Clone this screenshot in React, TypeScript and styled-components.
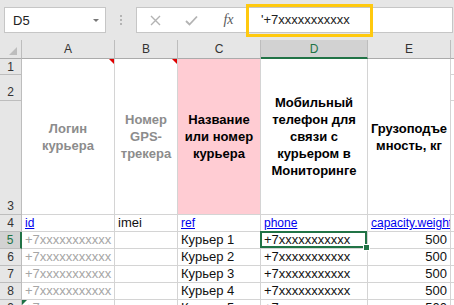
import React from 'react';
import styled, { createGlobalStyle, css } from 'styled-components';

const GlobalStyle = createGlobalStyle`
  html, body {
    margin: 0;
    padding: 0;
    background: #e6e6e6;
  }
  body {
    font-family: 'Liberation Sans', Arial, sans-serif;
    overflow: hidden;
  }
`;

const Window = styled.div`
  width: 454px;
  height: 305px;
  overflow: hidden;
  background: #e6e6e6;
`;

const Toolbar = styled.div`
  display: flex;
  align-items: flex-start;
  height: 40px;
  box-sizing: border-box;
  padding: 7px 1px 0 4px;
`;

const NameBox = styled.div`
  display: flex;
  align-items: center;
  justify-content: space-between;
  box-sizing: border-box;
  width: 102px;
  height: 26px;
  padding: 0 6px 0 8px;
  background: #fff;
  border: 1px solid #c6c6c6;
  font-size: 13px;
  color: #222;
`;

const Caret = styled.span`
  width: 0;
  height: 0;
  border-left: 3px solid transparent;
  border-right: 3px solid transparent;
  border-top: 3px solid #777;
`;

const Grip = styled.div`
  width: 30px;
  height: 26px;
  display: flex;
  flex-direction: column;
  align-items: center;
  justify-content: center;
  gap: 2px;

  span {
    width: 2px;
    height: 2px;
    background: #b4b4b4;
  }
`;

const FormulaBox = styled.div`
  flex: 1;
  display: flex;
  height: 26px;
  box-sizing: border-box;
  background: #fff;
  border: 1px solid #c6c6c6;
`;

const ToolButton = styled.div<{ $w: number }>`
  width: ${p => p.$w}px;
  display: flex;
  align-items: center;
  justify-content: center;
  color: #b0b0b0;
`;

const Fx = styled.span`
  font-family: 'Liberation Serif', 'Times New Roman', serif;
  font-style: italic;
  font-size: 14px;
  color: #5a5a5a;
`;

const FormulaInput = styled.div`
  position: relative;
  flex: 1;
  border-left: 1px solid #d4d4d4;
  padding-left: 12px;
  font-size: 13px;
  line-height: 24px;
  color: #222;
  white-space: nowrap;
`;

const Highlight = styled.div`
  position: absolute;
  left: -3px;
  top: -4px;
  width: 127px;
  height: 33px;
  box-sizing: border-box;
  border: 3px solid #ffc90e;
  pointer-events: none;
`;

const Sheet = styled.div`
  display: grid;
  grid-template-columns: 22px 93px 63px 83px 107px 83px 1fr;
  grid-template-rows: 19px 16px 26px 114px repeat(6, 17px);
  background: #fff;
`;

const Cell = styled.div<{ $align?: 'left' | 'right' }>`
  position: relative;
  box-sizing: border-box;
  border-right: 1px solid #d4d4d4;
  border-bottom: 1px solid #d4d4d4;
  padding: 0 3px;
  font-size: 13px;
  line-height: 16px;
  color: #111;
  white-space: nowrap;
  overflow: hidden;
  text-align: ${p => p.$align ?? 'left'};
`;

const Muted = styled(Cell)`
  color: #a6a6a6;
`;

const LinkCell = styled(Cell)`
  font-size: 12px;
  color: #0000ee;
  text-decoration: underline;
`;

const ActiveCell = styled(Cell)`
  overflow: visible;
  z-index: 2;

  &::after {
    content: '';
    position: absolute;
    top: -1px;
    left: -1px;
    right: 0;
    bottom: 0;
    border: 2px solid #217346;
    pointer-events: none;
  }

  &::before {
    content: '';
    position: absolute;
    right: -3px;
    bottom: -3px;
    width: 5px;
    height: 5px;
    background: #217346;
    border: 1px solid #fff;
    z-index: 3;
  }
`;

const headerBase = css`
  box-sizing: border-box;
  background: #e6e6e6;
  border-right: 1px solid #bdbdbd;
  border-bottom: 1px solid #bdbdbd;
  font-size: 12px;
  color: #333;
`;

const ColHead = styled.div<{ $active?: boolean }>`
  ${headerBase}
  display: flex;
  align-items: center;
  justify-content: center;
  border-bottom-color: #ababab;
  ${p =>
    p.$active &&
    css`
      background: #d2d2d2;
      color: #217346;
      border-bottom: 2px solid #217346;
    `}
`;

const Corner = styled.div`
  ${headerBase}
  border-bottom-color: #ababab;
  display: flex;
  align-items: flex-end;
  justify-content: flex-end;
  padding: 0 4px 3px 0;
`;

const RowHead = styled.div<{ $active?: boolean; $tall?: boolean }>`
  ${headerBase}
  display: flex;
  align-items: ${p => (p.$tall ? 'flex-end' : 'center')};
  justify-content: center;
  padding-bottom: ${p => (p.$tall ? '1px' : '0')};
  ${p =>
    p.$active &&
    css`
      background: #d2d2d2;
      color: #217346;
      border-right: 2px solid #217346;
    `}
`;

const TitleCell = styled.div<{ $tone: 'muted' | 'strong'; $fill?: string }>`
  position: relative;
  grid-row: 2 / span 3;
  box-sizing: border-box;
  border-right: 1px solid #d4d4d4;
  border-bottom: 1px solid #d4d4d4;
  background: ${p => p.$fill ?? '#fff'};
  display: flex;
  align-items: center;
  justify-content: center;
  text-align: center;
  padding: 0 3px;
  font-size: 13px;
  font-weight: 700;
  line-height: 17px;
  color: ${p => (p.$tone === 'muted' ? '#8c8c8c' : '#000')};
`;

const CommentMark = styled.span`
  position: absolute;
  top: 0;
  right: 0;
  width: 0;
  height: 0;
  border-left: 5px solid transparent;
  border-top: 5px solid #e00000;
`;

const ErrorMark = styled.span`
  position: absolute;
  top: 0;
  left: 0;
  width: 0;
  height: 0;
  border-right: 5px solid transparent;
  border-top: 5px solid #1e7145;
`;

const phone = '+7xxxxxxxxxxx';

const couriers = [1, 2, 3, 4, 5];

export default function App() {
  return (
    <Window>
      <GlobalStyle />
      <Toolbar>
        <NameBox>
          <span>D5</span>
          <Caret />
        </NameBox>
        <Grip>
          <span />
          <span />
          <span />
        </Grip>
        <FormulaBox>
          <ToolButton $w={36}>
            <svg width="11" height="11" viewBox="0 0 11 11">
              <path d="M1 1 L10 10 M10 1 L1 10" stroke="#b3b3b3" strokeWidth="1.4" fill="none" />
            </svg>
          </ToolButton>
          <ToolButton $w={36}>
            <svg width="13" height="11" viewBox="0 0 13 11">
              <path d="M1 6 L4.5 9.5 L12 1.5" stroke="#b3b3b3" strokeWidth="1.8" fill="none" />
            </svg>
          </ToolButton>
          <ToolButton $w={39}>
            <Fx>fx</Fx>
          </ToolButton>
          <FormulaInput>
            '{phone}
            <Highlight />
          </FormulaInput>
        </FormulaBox>
      </Toolbar>

      <Sheet>
        <Corner>
          <svg width="8" height="8" viewBox="0 0 8 8">
            <path d="M8 0 L8 8 L0 8 Z" fill="#bdbdbd" />
          </svg>
        </Corner>
        <ColHead>A</ColHead>
        <ColHead>B</ColHead>
        <ColHead>C</ColHead>
        <ColHead $active>D</ColHead>
        <ColHead>E</ColHead>
        <ColHead />

        <RowHead style={{ gridRow: 2 }}>1</RowHead>
        <TitleCell $tone="muted" style={{ gridColumn: 2 }}>
          Логин курьера
          <CommentMark />
        </TitleCell>
        <TitleCell $tone="muted" style={{ gridColumn: 3 }}>
          Номер GPS-трекера
          <CommentMark />
        </TitleCell>
        <TitleCell $tone="strong" $fill="#ffccd3" style={{ gridColumn: 4 }}>
          Название или номер курьера
        </TitleCell>
        <TitleCell $tone="strong" style={{ gridColumn: 5 }}>
          Мобильный телефон для связи с курьером в Мониторинге
        </TitleCell>
        <TitleCell $tone="strong" style={{ gridColumn: 6 }}>
          Грузоподъе
          <br />
          мность, кг
        </TitleCell>
        <Cell style={{ gridColumn: 7, gridRow: 2 }} />
        <RowHead $tall style={{ gridRow: 3 }}>2</RowHead>
        <Cell style={{ gridColumn: 7, gridRow: 3 }} />
        <RowHead $tall style={{ gridRow: 4 }}>3</RowHead>
        <Cell style={{ gridColumn: 7, gridRow: 4 }} />

        <RowHead>4</RowHead>
        <LinkCell>id</LinkCell>
        <Cell>imei</Cell>
        <LinkCell>ref</LinkCell>
        <LinkCell>phone</LinkCell>
        <LinkCell>capacity.weight</LinkCell>
        <Cell />

        {couriers.map(n => {
          const row = n + 4;
          const Phone = n === 1 ? ActiveCell : Cell;
          return (
            <React.Fragment key={n}>
              <RowHead $active={n === 1}>{row}</RowHead>
              <Muted>
                {phone}
                {n === 5 && <ErrorMark />}
              </Muted>
              <Cell />
              <Cell>Курьер {n}</Cell>
              <Phone>{phone}</Phone>
              <Cell $align="right">500</Cell>
              <Cell />
            </React.Fragment>
          );
        })}
      </Sheet>
    </Window>
  );
}
